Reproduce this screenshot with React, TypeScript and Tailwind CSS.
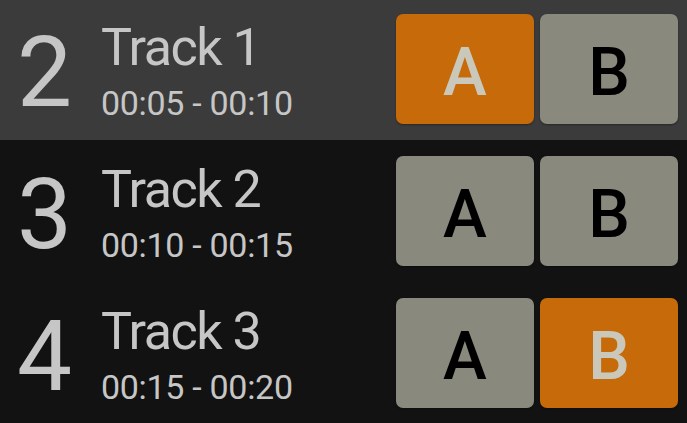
const tracks = [
  { num: 2, name: "Track 1", time: "00:05 - 00:10", active: "A", current: true },
  { num: 3, name: "Track 2", time: "00:10 - 00:15", active: "", current: false },
  { num: 4, name: "Track 3", time: "00:15 - 00:20", active: "B", current: false },
];

const SideButton = ({ label, on }: { label: string; on: boolean }) => (
  <button
    className={`w-[138px] h-[110px] rounded-[7px] flex items-center justify-center text-[66px] font-medium leading-none pt-[7px] shadow-[0_1px_2px_rgba(0,0,0,0.35)] ${
      on ? "bg-[#c66a0a] text-[#cac8bb]" : "bg-[#89897e] text-black"
    }`}
  >
    {label}
  </button>
);

export default function App() {
  return (
    <div
      className="w-[687px] h-[423px] overflow-hidden bg-[#121212] text-[#c6c6c6]"
      style={{ fontFamily: "Roboto, 'Noto Sans', sans-serif" }}
    >
      <div className="-mt-[2px] flex flex-col">
        {tracks.map((t) => (
          <div
            key={t.num}
            className={`h-[142px] flex items-center pr-[9px] ${t.current ? "bg-[#3b3b3b]" : ""}`}
          >
            <div className="w-[101px] pl-[17px] text-[98px] leading-none pt-[8px]">{t.num}</div>
            <div className="flex-1 flex flex-col pt-[5px]">
              <div className="text-[52px] leading-[56px] tracking-[-1.5px]">{t.name}</div>
              <div className="mt-[7px] text-[34px] leading-[40px] tracking-[-0.3px]">{t.time}</div>
            </div>
            <div className="flex gap-[6px]">
              <SideButton label="A" on={t.active === "A"} />
              <SideButton label="B" on={t.active === "B"} />
            </div>
          </div>
        ))}
      </div>
    </div>
  );
}
